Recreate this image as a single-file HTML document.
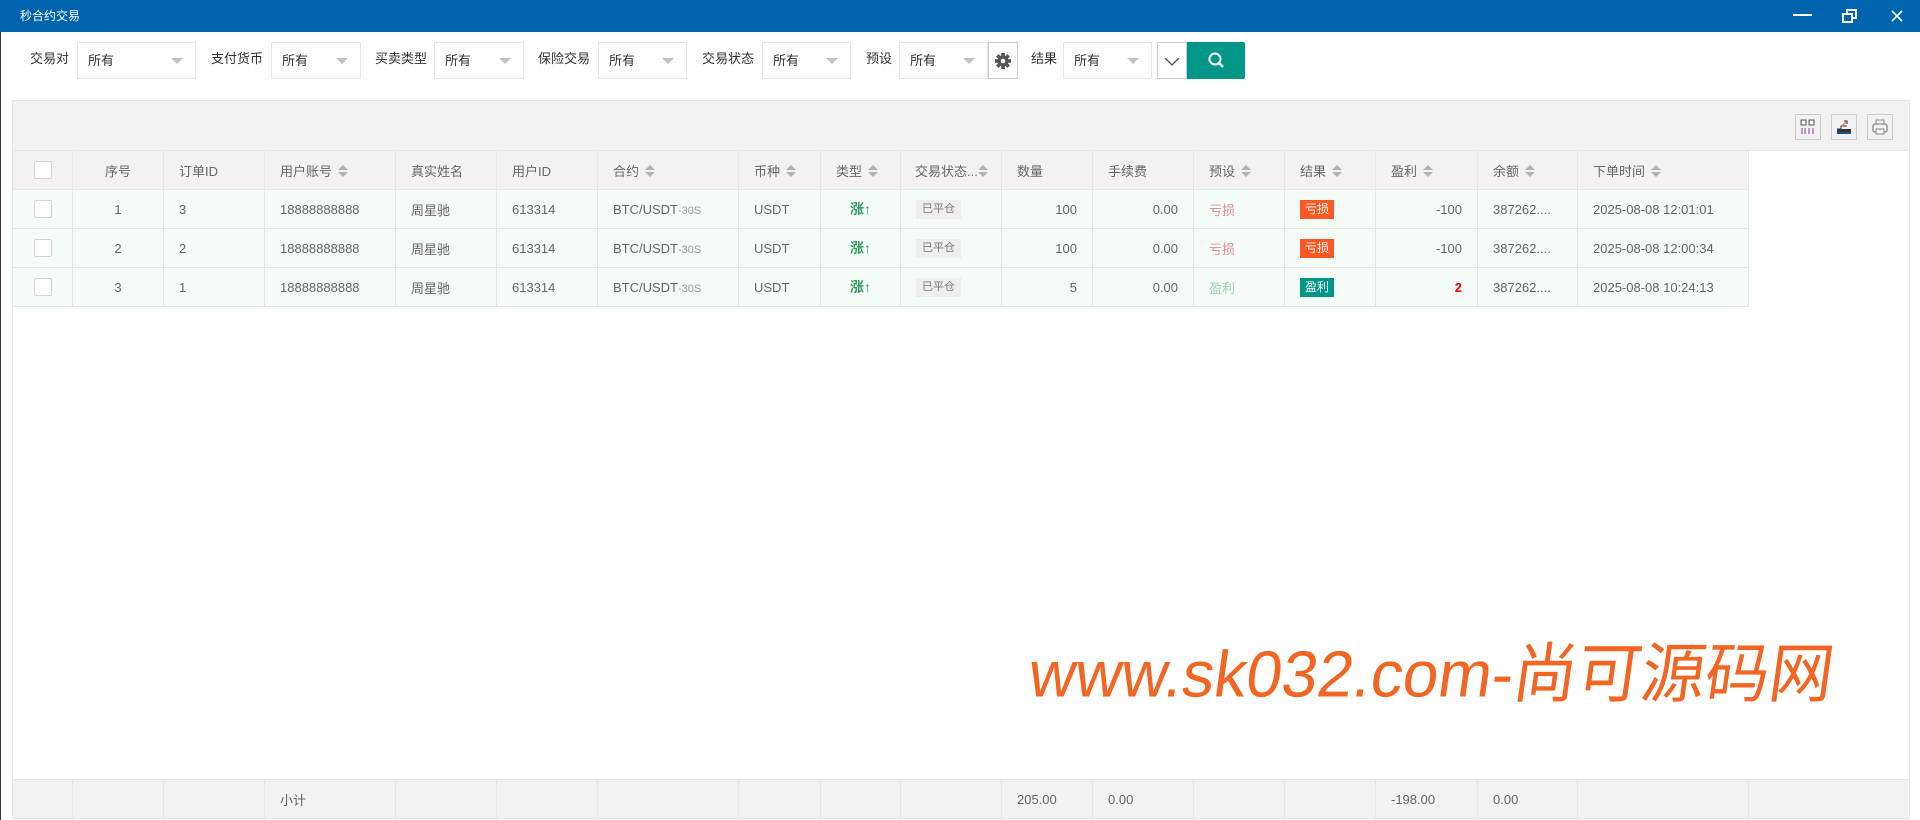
<!DOCTYPE html>
<html><head><meta charset="utf-8">
<style>
*{box-sizing:border-box;margin:0;padding:0}
body{width:1920px;height:820px;overflow:hidden;background:#fff;font-family:"Liberation Sans","Noto Sans CJK SC",sans-serif;font-size:13px;color:#666;position:relative}
.a{position:absolute}
.title{left:0;top:0;width:1920px;height:32px;background:#0063ae;color:#fff;font-size:12px;line-height:32px;padding-left:20px}
.lb{top:42px;height:37px;line-height:33px;color:#333;font-size:13px}
.sel{top:42px;height:37px;border:1px solid #e6e6e6;background:#fff;color:#333;line-height:35px;padding-left:10px;font-size:13px}
.sel:after{content:"";position:absolute;right:12px;top:15px;border:6px solid transparent;border-top:6px solid #c2c2c2}
.panel{left:12px;top:100px;width:1898px;height:718px;border:1px solid #e6e6e6;border-bottom:none}
.tool{left:12px;top:100px;width:1898px;height:51px;background:#f2f2f2;border:1px solid #e6e6e6}
.tb{top:114px;width:26px;height:26px;border:1px solid #ccc;background:#f2f2f2}
table{border-collapse:collapse;table-layout:fixed;position:absolute;left:12px}
td{border:1px solid #e6e6e6;height:39px;padding:0 15px;white-space:nowrap;overflow:hidden;color:#666}
.hd td{background:#f2f2f2}
.bd td{background:#f5fcf8}
.c{text-align:center}.r{text-align:right}
.cb{display:inline-block;width:18px;height:18px;border:1px solid #d2d2d2;background:#fff;vertical-align:middle;border-radius:2px}
.so{display:inline-block;vertical-align:middle;margin-left:6px;position:relative;width:10px;height:14px}
.so:before{content:"";position:absolute;left:0;top:0;border:5px solid transparent;border-bottom:5px solid #b2b2b2;border-top:none}
.so:after{content:"";position:absolute;left:0;top:7px;border:5px solid transparent;border-top:5px solid #b2b2b2;border-bottom:none}
.g{display:inline-block;background:#eee;color:#777;font-size:11px;padding:0 6px;line-height:19px}
.bl{display:inline-block;background:#ff5722;color:#fff;font-size:12px;padding:0 5px;line-height:19px}
.bg{display:inline-block;background:#009688;color:#fff;font-size:12px;padding:0 5px;line-height:19px}
.up{color:#2e9e5e;font-weight:bold;font-size:14px}
.s{color:#999;font-size:11px}
.ft td{background:#f2f2f2;height:39px}
.wm{left:1030px;top:637px;font-size:64px;line-height:74px;color:#f26522;white-space:nowrap;transform:skewX(-8deg) scaleY(1.02);transform-origin:left center}
</style></head><body>
<div class="a" style="left:0;top:0;width:1px;height:820px;background:#333"></div>
<div class="a title">秒合约交易</div>
<svg class="a" style="left:1790px;top:8px" width="120" height="18">
<line x1="3" y1="7" x2="22" y2="7" stroke="#fff" stroke-width="2"/>
<rect x="53" y="6" width="9" height="8" fill="none" stroke="#fff" stroke-width="2"/>
<path d="M57 5V2h9v8h-3" fill="none" stroke="#fff" stroke-width="2"/>
<path d="M102 3l10 10M112 3l-10 10" stroke="#fff" stroke-width="1.6"/>
</svg>

<div class="a lb" style="left:30px">交易对</div><div class="a sel" style="left:77px;width:119px">所有</div>
<div class="a lb" style="left:211px">支付货币</div><div class="a sel" style="left:271px;width:90px">所有</div>
<div class="a lb" style="left:375px">买卖类型</div><div class="a sel" style="left:434px;width:90px">所有</div>
<div class="a lb" style="left:538px">保险交易</div><div class="a sel" style="left:598px;width:89px">所有</div>
<div class="a lb" style="left:702px">交易状态</div><div class="a sel" style="left:762px;width:89px">所有</div>
<div class="a lb" style="left:866px">预设</div><div class="a sel" style="left:899px;width:89px">所有</div>
<div class="a" style="left:988px;top:42px;width:30px;height:37px;border:1px solid #ccc;background:#fff">
<svg width="28" height="35"><g transform="translate(14,18)" fill="#555"><circle r="5.5"/><g><rect x="-1.8" y="-8" width="3.6" height="16"/><rect x="-1.8" y="-8" width="3.6" height="16" transform="rotate(45)"/><rect x="-1.8" y="-8" width="3.6" height="16" transform="rotate(90)"/><rect x="-1.8" y="-8" width="3.6" height="16" transform="rotate(135)"/></g><circle r="2.3" fill="#fff"/></g></svg></div>
<div class="a lb" style="left:1031px">结果</div><div class="a sel" style="left:1063px;width:89px">所有</div>
<div class="a" style="left:1157px;top:42px;width:30px;height:37px;border:1px solid #ccc;background:#fff">
<svg width="28" height="35"><path d="M7 15l7 7 7-7" fill="none" stroke="#555" stroke-width="1.3"/></svg></div>
<div class="a" style="left:1187px;top:42px;width:58px;height:37px;background:#009688;border-radius:0 2px 2px 0">
<svg width="58" height="37"><circle cx="28" cy="17" r="5.5" fill="none" stroke="#fff" stroke-width="2"/><path d="M32 21l4 4" stroke="#fff" stroke-width="2.5"/></svg></div>

<div class="a panel"></div>
<div class="a tool"></div>
<div class="a tb" style="left:1795px"><svg width="24" height="24"><rect x="5" y="5" width="5" height="5" fill="none" stroke="#555"/><rect x="13" y="5" width="5" height="5" fill="none" stroke="#555"/><path d="M6 13v6M9 13v6M13 13v6M17 13v6" stroke="#7b3f8f"/></svg></div>
<div class="a tb" style="left:1831px"><svg width="24" height="24"><path d="M5 14h14v5H5z" fill="#333"/><path d="M5 14h4v-3h6" fill="none" stroke="#333"/><path d="M10 11l4-4" stroke="#e58a2a" stroke-width="1.5"/><path d="M12 6h3v3" fill="none" stroke="#333"/><rect x="5" y="17" width="14" height="2" fill="#1a4fa0"/></svg></div>
<div class="a tb" style="left:1867px"><svg width="24" height="24"><rect x="5" y="9" width="14" height="8" rx="2" fill="none" stroke="#888" stroke-width="1.3"/><rect x="8" y="5" width="8" height="4" fill="none" stroke="#888"/><rect x="8" y="14" width="8" height="5" fill="#f2f2f2" stroke="#888"/></svg></div>

<table style="top:150px;width:1737px">
<colgroup><col style="width:60px"><col style="width:91px"><col style="width:101px"><col style="width:131px"><col style="width:101px"><col style="width:101px"><col style="width:141px"><col style="width:82px"><col style="width:80px"><col style="width:101px"><col style="width:91px"><col style="width:101px"><col style="width:91px"><col style="width:91px"><col style="width:102px"><col style="width:100px"><col style="width:171px"></colgroup>
<tr class="hd"><td class="c"><span class="cb"></span></td><td class="c">序号</td><td>订单ID</td><td>用户账号<span class="so"></span></td><td>真实姓名</td><td>用户ID</td><td>合约<span class="so"></span></td><td>币种<span class="so"></span></td><td>类型<span class="so"></span></td><td style="padding:0 0 0 14px">交易状态...<span class="so" style="margin-left:0"></span></td><td>数量</td><td>手续费</td><td>预设<span class="so"></span></td><td>结果<span class="so"></span></td><td>盈利<span class="so"></span></td><td>余额<span class="so"></span></td><td>下单时间<span class="so"></span></td></tr>
<tr class="bd"><td class="c"><span class="cb"></span></td><td class="c">1</td><td>3</td><td>18888888888</td><td>周星驰</td><td>613314</td><td>BTC/USDT<span class="s">-30S</span></td><td>USDT</td><td class="c up">涨↑</td><td><span class="g">已平仓</span></td><td class="r">100</td><td class="r">0.00</td><td style="color:#e08a8a">亏损</td><td><span class="bl">亏损</span></td><td class="r">-100</td><td>387262....</td><td>2025-08-08 12:01:01</td></tr>
<tr class="bd"><td class="c"><span class="cb"></span></td><td class="c">2</td><td>2</td><td>18888888888</td><td>周星驰</td><td>613314</td><td>BTC/USDT<span class="s">-30S</span></td><td>USDT</td><td class="c up">涨↑</td><td><span class="g">已平仓</span></td><td class="r">100</td><td class="r">0.00</td><td style="color:#e08a8a">亏损</td><td><span class="bl">亏损</span></td><td class="r">-100</td><td>387262....</td><td>2025-08-08 12:00:34</td></tr>
<tr class="bd"><td class="c"><span class="cb"></span></td><td class="c">3</td><td>1</td><td>18888888888</td><td>周星驰</td><td>613314</td><td>BTC/USDT<span class="s">-30S</span></td><td>USDT</td><td class="c up">涨↑</td><td><span class="g">已平仓</span></td><td class="r">5</td><td class="r">0.00</td><td style="color:#90d6a8">盈利</td><td><span class="bg">盈利</span></td><td class="r" style="color:#e00;font-weight:bold">2</td><td>387262....</td><td>2025-08-08 10:24:13</td></tr>
</table>

<div class="a wm">www.sk032.com-尚可源码网</div>

<table style="top:779px;width:1898px" class="ft">
<colgroup><col style="width:60px"><col style="width:91px"><col style="width:101px"><col style="width:131px"><col style="width:101px"><col style="width:101px"><col style="width:141px"><col style="width:82px"><col style="width:80px"><col style="width:101px"><col style="width:91px"><col style="width:101px"><col style="width:91px"><col style="width:91px"><col style="width:102px"><col style="width:100px"><col style="width:171px"><col style="width:161px"></colgroup>
<tr><td></td><td></td><td></td><td>小计</td><td></td><td></td><td></td><td></td><td></td><td></td><td>205.00</td><td>0.00</td><td></td><td></td><td>-198.00</td><td>0.00</td><td></td><td></td></tr>
</table>
</body></html>
